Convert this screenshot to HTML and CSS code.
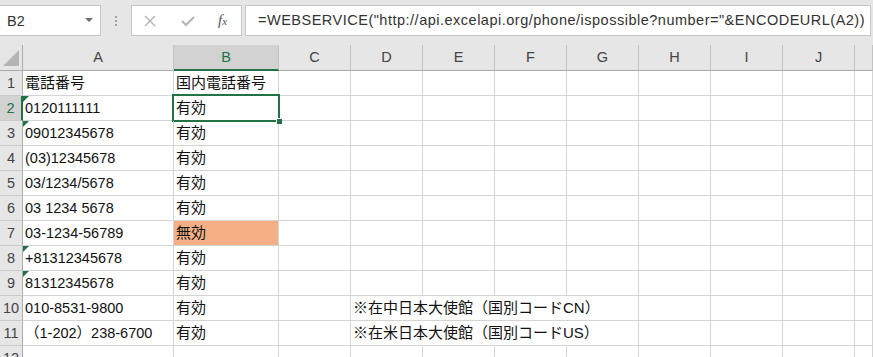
FILE: index.html
```html
<!DOCTYPE html>
<html lang="ja">
<head>
    <meta charset="UTF-8">
    <title>電話番号チェック</title>
    <link rel="stylesheet" href="styles.css">
</head>
<body>
    <div class="toolbar">
        <div class="name-box">
            <span>B2</span>
            <svg class="drop" width="8" height="5" viewBox="0 0 8 5"><polygon points="0,0 8,0 4,4" fill="#6d6d6d"/></svg>
        </div>
        <div class="grip"><i></i><i></i><i></i></div>
        <div class="fx-buttons">
            <svg class="btn" width="12" height="12" viewBox="0 0 12 12"><path d="M1 1 L11 11 M11 1 L1 11" stroke="#b3b3b3" stroke-width="1.4" fill="none"/></svg>
            <svg class="btn" width="14" height="12" viewBox="0 0 14 12"><path d="M1 6 L5 10 L13 2" stroke="#b3b3b3" stroke-width="2" fill="none"/></svg>
            <span class="fx">f<sub>x</sub></span>
        </div>
        <div class="formula">=WEBSERVICE("http://api.excelapi.org/phone/ispossible?number="&amp;ENCODEURL(A2))</div>
    </div>

    <div class="sheet">
        <div class="corner"><svg width="23" height="25" viewBox="0 0 23 25"><polygon points="19,5 19,21 3,21" fill="#b4b4b4"/></svg></div>
        <div class="col-head">A</div>
        <div class="col-head active">B</div>
        <div class="col-head">C</div>
        <div class="col-head">D</div>
        <div class="col-head">E</div>
        <div class="col-head">F</div>
        <div class="col-head">G</div>
        <div class="col-head">H</div>
        <div class="col-head">I</div>
        <div class="col-head">J</div>
        <div class="col-head"></div>

        <div class="row-head">1</div>
        <div class="cell jp">電話番号</div>
        <div class="cell jp">国内電話番号</div>
        <div class="cell"></div><div class="cell"></div><div class="cell"></div><div class="cell"></div><div class="cell"></div><div class="cell"></div><div class="cell"></div><div class="cell"></div><div class="cell"></div>

        <div class="row-head active">2</div>
        <div class="cell flag">0120111111</div>
        <div class="cell jp selected">有効</div>
        <div class="cell"></div><div class="cell"></div><div class="cell"></div><div class="cell"></div><div class="cell"></div><div class="cell"></div><div class="cell"></div><div class="cell"></div><div class="cell"></div>

        <div class="row-head">3</div>
        <div class="cell flag">09012345678</div>
        <div class="cell jp">有効</div>
        <div class="cell"></div><div class="cell"></div><div class="cell"></div><div class="cell"></div><div class="cell"></div><div class="cell"></div><div class="cell"></div><div class="cell"></div><div class="cell"></div>

        <div class="row-head">4</div>
        <div class="cell">(03)12345678</div>
        <div class="cell jp">有効</div>
        <div class="cell"></div><div class="cell"></div><div class="cell"></div><div class="cell"></div><div class="cell"></div><div class="cell"></div><div class="cell"></div><div class="cell"></div><div class="cell"></div>

        <div class="row-head">5</div>
        <div class="cell">03/1234/5678</div>
        <div class="cell jp">有効</div>
        <div class="cell"></div><div class="cell"></div><div class="cell"></div><div class="cell"></div><div class="cell"></div><div class="cell"></div><div class="cell"></div><div class="cell"></div><div class="cell"></div>

        <div class="row-head">6</div>
        <div class="cell">03 1234 5678</div>
        <div class="cell jp">有効</div>
        <div class="cell"></div><div class="cell"></div><div class="cell"></div><div class="cell"></div><div class="cell"></div><div class="cell"></div><div class="cell"></div><div class="cell"></div><div class="cell"></div>

        <div class="row-head">7</div>
        <div class="cell">03-1234-56789</div>
        <div class="cell jp invalid">無効</div>
        <div class="cell"></div><div class="cell"></div><div class="cell"></div><div class="cell"></div><div class="cell"></div><div class="cell"></div><div class="cell"></div><div class="cell"></div><div class="cell"></div>

        <div class="row-head">8</div>
        <div class="cell flag">+81312345678</div>
        <div class="cell jp">有効</div>
        <div class="cell"></div><div class="cell"></div><div class="cell"></div><div class="cell"></div><div class="cell"></div><div class="cell"></div><div class="cell"></div><div class="cell"></div><div class="cell"></div>

        <div class="row-head">9</div>
        <div class="cell flag">81312345678</div>
        <div class="cell jp">有効</div>
        <div class="cell"></div><div class="cell"></div><div class="cell"></div><div class="cell"></div><div class="cell"></div><div class="cell"></div><div class="cell"></div><div class="cell"></div><div class="cell"></div>

        <div class="row-head">10</div>
        <div class="cell">010-8531-9800</div>
        <div class="cell jp">有効</div>
        <div class="cell"></div>
        <div class="cell jp note">※在中日本大使館（国別コードCN）</div>
        <div class="cell"></div><div class="cell"></div><div class="cell"></div><div class="cell"></div>

        <div class="row-head">11</div>
        <div class="cell">（1-202）238-6700</div>
        <div class="cell jp">有効</div>
        <div class="cell"></div>
        <div class="cell jp note">※在米日本大使館（国別コードUS）</div>
        <div class="cell"></div><div class="cell"></div><div class="cell"></div><div class="cell"></div>

        <div class="row-head">12</div>
        <div class="cell"></div><div class="cell"></div><div class="cell"></div><div class="cell"></div><div class="cell"></div><div class="cell"></div><div class="cell"></div><div class="cell"></div><div class="cell"></div><div class="cell"></div><div class="cell"></div>
    </div>
</body>
</html>
```

FILE: styles.css
```css
body {
    margin: 0;
    background: #ffffff;
    font-family: "Liberation Sans", "Noto Sans CJK JP", sans-serif;
    font-size: 14.5px;
    color: #111;
    overflow: hidden;
}

/* formula bar */
.toolbar {
    height: 45px;
    box-sizing: border-box;
    padding-top: 5px;
    background: #e6e6e6;
    display: flex;
    align-items: flex-start;
}

.name-box {
    width: 101px;
    height: 31px;
    box-sizing: border-box;
    background: #fff;
    border: 1px solid #c6c6c6;
    border-left: none;
    display: flex;
    align-items: center;
    justify-content: space-between;
    padding: 0 7px 0 7px;
    color: #333;
}

.grip {
    width: 30px;
    height: 31px;
    display: flex;
    flex-direction: column;
    align-items: center;
    justify-content: center;
    gap: 2px;
}

.grip i {
    width: 2px;
    height: 2px;
    background: #a0a0a0;
}

.fx-buttons {
    width: 111px;
    height: 31px;
    box-sizing: border-box;
    background: #fff;
    border: 1px solid #c6c6c6;
    display: flex;
    align-items: center;
    padding-left: 12px;
    gap: 25px;
}

.fx {
    font-family: "Liberation Serif", serif;
    font-style: italic;
    font-size: 15px;
    color: #555;
    margin-left: -2px;
}

.fx sub {
    font-size: 11px;
    vertical-align: 0;
}

.formula {
    width: 626px;
    height: 31px;
    margin-left: 3px;
    box-sizing: border-box;
    background: #fff;
    border: 1px solid #c6c6c6;
    padding-left: 12px;
    line-height: 29px;
    letter-spacing: 0.5px;
    color: #333;
    white-space: nowrap;
    overflow: hidden;
}

/* grid */
.sheet {
    display: grid;
    grid-template-columns: 23px 151px 105px repeat(8, 72px) 1fr;
    grid-template-rows: 26px repeat(12, 25px);
}

.corner, .col-head, .row-head {
    background: #e6e6e6;
    color: #444;
    box-sizing: border-box;
}

.corner {
    border-right: 1px solid #ababab;
    border-bottom: 1px solid #ababab;
}

.corner svg {
    display: block;
}

.col-head {
    border-right: 1px solid #c2c2c2;
    border-bottom: 1px solid #ababab;
    text-align: center;
    line-height: 25px;
}

.col-head.active {
    background: #d2d2d2;
    color: #217346;
    border-bottom: 2px solid #217346;
}

.row-head {
    border-right: 1px solid #ababab;
    border-bottom: 1px solid #cacaca;
    text-align: center;
    line-height: 24px;
}

.row-head.active {
    background: #d2d2d2;
    color: #217346;
    border-right: 2px solid #217346;
}

.cell {
    box-sizing: border-box;
    border-right: 1px solid #d4d4d4;
    border-bottom: 1px solid #d4d4d4;
    padding: 0 2px;
    line-height: 24px;
    white-space: nowrap;
    position: relative;
}

.cell.jp {
    font-size: 15px;
}

.cell.note {
    grid-column: span 4;
}

.cell.invalid {
    background: #f4b084;
}

/* number stored as text marker */
.cell.flag::before {
    content: "";
    position: absolute;
    top: 0;
    left: 0;
    border-top: 6px solid #217346;
    border-right: 6px solid transparent;
}

.cell.selected::after {
    content: "";
    position: absolute;
    top: -2px;
    left: -2px;
    right: -2px;
    bottom: -2px;
    border: 2px solid #217346;
}

.cell.selected::before {
    content: "";
    position: absolute;
    right: -4px;
    bottom: -4px;
    width: 5px;
    height: 5px;
    background: #217346;
    border: 1px solid #fff;
    border-right: none;
    border-bottom: none;
    z-index: 2;
}
```
